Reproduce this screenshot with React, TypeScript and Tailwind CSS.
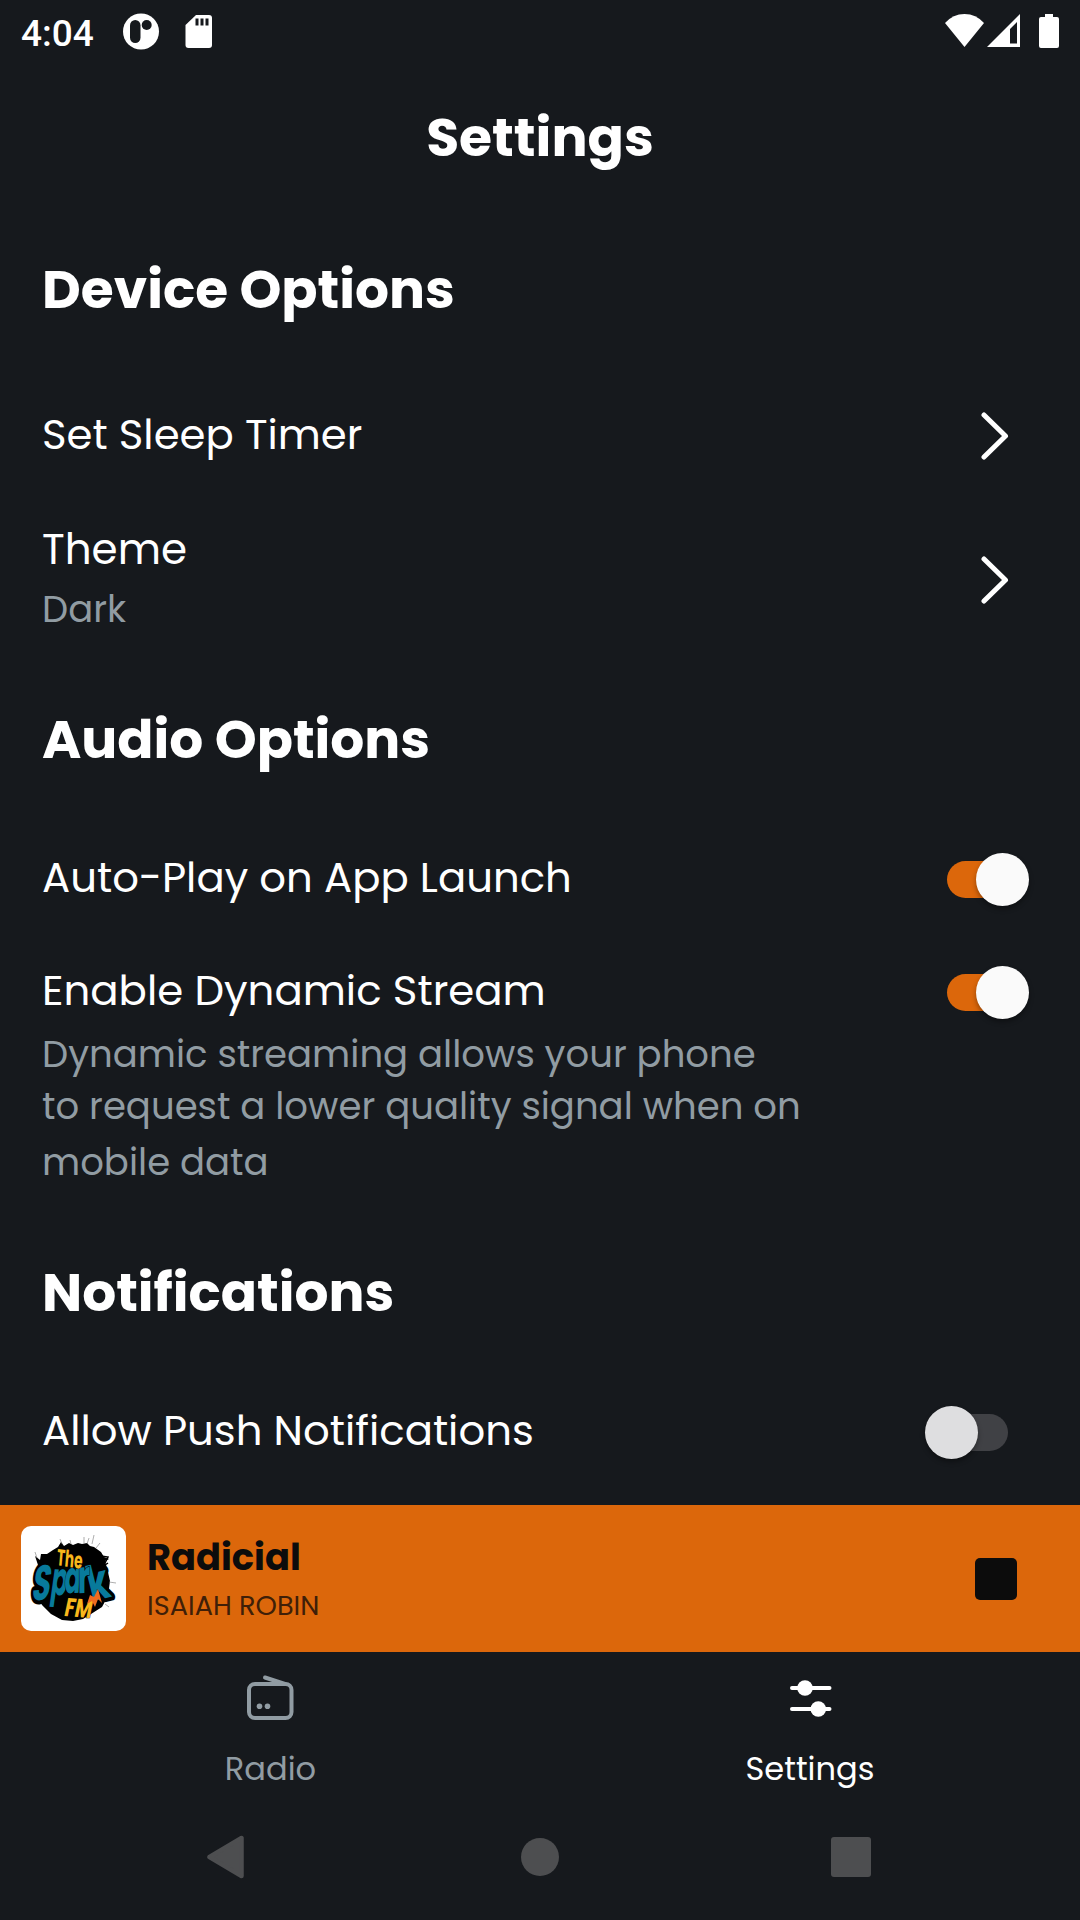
import { useState } from 'react';
import type { ReactNode } from 'react';
import clsx from 'clsx';

function StatusBar() {
  return (
    <div className="flex h-16 items-start justify-between pl-[21px] pr-[21px]">
      <div className="flex">
        <span className="w-[102px] pt-[14px] font-['Roboto'] text-[37px] font-medium leading-[40px]">4:04</span>
        <svg className="mt-[13px]" width="37" height="37" viewBox="0 0 37 37">
          <circle cx="18" cy="18.5" r="18" fill="#fff" />
          <rect x="7" y="7" width="10.5" height="23" rx="5.25" fill="#16191d" />
          <circle cx="23.7" cy="12" r="5" fill="#16191d" />
        </svg>
        <svg className="ml-[25px] mt-[15px]" width="28" height="34" viewBox="0 0 28 34">
          <path d="M11 0H24Q27 0 27 3V30Q27 33 24 33H3.5Q.5 33 .5 30V10Z" fill="#fff" />
          <path d="M10.5 3.5H13.5V10.5H10.5ZM15.5 3.5H18.5V10.5H15.5ZM20.5 3.5H23.5V10.5H20.5Z" fill="#16191d" />
        </svg>
      </div>
      <div className="flex pt-[14px]">
        <svg width="39" height="34" viewBox="0 0 39 34">
          <path d="M0 9Q8 0 19.5 0T39 9L19.5 33Z" fill="#fff" />
        </svg>
        <svg className="ml-[3px]" width="34" height="34" viewBox="0 0 34 34">
          <path d="M33 0V33H0ZM30 8L23 15V29.5H30Z" fill="#fff" fillRule="evenodd" />
        </svg>
        <svg className="ml-[18px]" width="20" height="34" viewBox="0 0 20 34">
          <path d="M6 0H14V3H18Q20 3 20 5V32Q20 34 18 34H2Q0 34 0 32V5Q0 3 2 3H6Z" fill="#fff" />
        </svg>
      </div>
    </div>
  );
}

function SectionTitle({ children }: { children: ReactNode }) {
  return <h2 className="flex h-[158px] items-center pt-0.5 text-[53.4px] font-bold leading-[80px]">{children}</h2>;
}

function Chevron() {
  return (
    <svg className="mr-[58px]" width="48" height="48" viewBox="0 0 48 48" fill="none" stroke="#fff" strokeWidth="5" strokeLinecap="round" strokeLinejoin="round">
      <path d="M10 3L31.5 24L10 45" />
    </svg>
  );
}

function Toggle({ on, onClick }: { on: boolean; onClick: () => void }) {
  return (
    <button onClick={onClick} role="switch" aria-checked={on} className="mr-[51px] flex h-[53px] w-[104px] items-center justify-center">
      <span className={clsx('flex h-[37px] w-[61px] items-center rounded-full', on ? 'bg-[#dc670b]' : 'bg-[#404145]')}>
        <span
          className={clsx(
            'h-[53px] w-[53px] shrink-0 rounded-full shadow-[0_3px_5px_rgba(0,0,0,0.35)]',
            on ? 'ml-[29px] bg-[#fafafa]' : '-ml-[22px] bg-[#dedee0]'
          )}
        />
      </span>
    </button>
  );
}

function AlbumArt() {
  return (
    <svg width="105" height="105" viewBox="0 0 105 105" className="rounded-[10px] bg-white">
      {/* ink splatter */}
      <path
        d="M18 42L14 30L19 34L20 28L26 28L32 24L37 21L40 16L43 20L48 17L52 19L57 17L61 18L66 17L69 20L73 21L80 26L83 31L88 33L84 35L86 42L89 55L87 70L81 81L70 88L62 93L52 95L41 94L30 88L21 79L15 68Z"
        fill="#000"
      />
      <path d="M39 13l2 5M49 14l1 4M63 11l0 6M68 12l-2 6M73 9l-2 9M79 17l-4 5M14 26l2 6M88 56l7 1M84 78l4 3" stroke="#777" strokeWidth=".6" />
      <path d="M80 30l7 1l-3 6M84 39l3-2" stroke="#000" strokeWidth="1.5" fill="none" />
      <g fontFamily="Poppins, sans-serif" fontWeight="700" textAnchor="middle" paintOrder="stroke" stroke="#000" strokeLinejoin="round">
        <g fontSize="36" fill="#087a9b" strokeWidth="6">
          <text transform="translate(19 74) rotate(-6) skewX(-14) scale(.84 1.35)">S</text>
          <text transform="translate(81 73) rotate(-14) scale(.95 1.35)">k</text>
        </g>
        <g fontSize="40" fill="#087a9b" strokeWidth="1">
          <text transform="translate(37 69) rotate(4) skewX(-4) scale(.6 1.15)">p</text>
          <text transform="translate(51 67) rotate(-2) skewX(-6) scale(.6 1.1)">a</text>
          <text transform="translate(63 67) rotate(-4) skewX(-4) scale(.72 1.15)">r</text>
        </g>
        <g fill="#f8b71c" strokeWidth="1">
          <text fontSize="23" transform="translate(48 41) rotate(9) skewX(4) scale(.6 1)">The</text>
          <text fontSize="26" transform="translate(56 91) rotate(4) skewX(-8) scale(.72 1)">FM</text>
        </g>
      </g>
      <path d="M66 78L69 69L73 71L77 63L81 77L77 73L74 81L71 75Z" fill="#ef6b20" />
    </svg>
  );
}

function RadioIcon() {
  return (
    <svg width="52" height="52" viewBox="0 0 52 52" fill="none" stroke="#919ca3" strokeWidth="4" strokeLinecap="round" strokeLinejoin="round">
      <rect x="5" y="14" width="42.5" height="34" rx="6" />
      <path d="M21 7.5L41 14" />
      <circle cx="15.5" cy="36.3" r="2.8" fill="#919ca3" stroke="none" />
      <circle cx="23.5" cy="36.3" r="2.8" fill="#919ca3" stroke="none" />
    </svg>
  );
}

function SlidersIcon() {
  return (
    <svg width="52" height="52" viewBox="0 0 52 52" fill="#fff" stroke="#fff" strokeWidth="4" strokeLinecap="round">
      <path d="M8 18H45.5M8 39H45.5" />
      <circle cx="21" cy="18" r="7.8" stroke="none" />
      <circle cx="34.3" cy="39" r="7.8" stroke="none" />
    </svg>
  );
}

function App() {
  const [autoPlay, setAutoPlay] = useState(true);
  const [dynamicStream, setDynamicStream] = useState(true);
  const [push, setPush] = useState(false);

  return (
    <div className="flex h-[1920px] w-[1080px] flex-col overflow-hidden bg-[#16191d] font-['Poppins',sans-serif] text-white">
      <StatusBar />
      <header className="flex h-[146px] items-center justify-center pt-0.5">
        <h1 className="text-[53.6px] font-bold leading-[80px]">Settings</h1>
      </header>

      <main className="h-[1295px] pl-[42px]">
        <SectionTitle>Device Options</SectionTitle>
        <div className="flex h-[132px] items-center justify-between pt-0.5">
          <span className="text-[41.8px] leading-[60px]">Set Sleep Timer</span>
          <div className="pt-0.5">
            <Chevron />
          </div>
        </div>
        <div className="flex h-[160px] items-center justify-between">
          <div className="flex flex-col pb-px">
            <span className="text-[42px] leading-[60px]">Theme</span>
            <span className="text-[37px] leading-[59px] text-[#919ca3]">Dark</span>
          </div>
          <Chevron />
        </div>

        <SectionTitle>Audio Options</SectionTitle>
        <div className="flex h-[118px] items-center justify-between pt-0.5">
          <span className="text-[41.8px] leading-[60px]">Auto-Play on App Launch</span>
          <div className="pt-0.5">
            <Toggle on={autoPlay} onClick={() => setAutoPlay(!autoPlay)} />
          </div>
        </div>
        <div className="flex h-[277px] items-start justify-between pt-[25px]">
          <div className="flex flex-col">
            <span className="text-[41.9px] leading-[60px]">Enable Dynamic Stream</span>
            <p className="mt-[7px] text-[37.05px] leading-[52px] text-[#919ca3]">
              <span className="block">Dynamic streaming allows your phone</span>
              <span className="block">to request a lower quality signal when on</span>
              <span className="mt-1 block">mobile data</span>
            </p>
          </div>
          <div className="pt-[5px]">
            <Toggle on={dynamicStream} onClick={() => setDynamicStream(!dynamicStream)} />
          </div>
        </div>

        <SectionTitle>Notifications</SectionTitle>
        <div className="flex h-[118px] items-center justify-between pt-0.5">
          <span className="text-[41.8px] leading-[60px]">Allow Push Notifications</span>
          <div className="pt-0.5">
            <Toggle on={push} onClick={() => setPush(!push)} />
          </div>
        </div>
      </main>

      <div className="flex h-[147px] items-center bg-[#dc670b] px-[21px] text-[#0c0c0c]">
        <AlbumArt />
        <div className="ml-[21px] flex flex-1 flex-col pt-[3px]">
          <span className="text-[36.8px] font-bold leading-[50px]">Radicial</span>
          <span className="text-[27.2px] leading-[47px] text-[#3f1f08]">ISAIAH ROBIN</span>
        </div>
        <button className="mr-[42px] mt-px h-[42px] w-[42px] rounded-[5px] bg-[#0c0c0c]" aria-label="Stop" />
      </div>

      <nav className="grid h-[142px] grid-cols-2 text-[32.1px] leading-[48px]">
        <button className="flex flex-col items-center gap-[23px] pt-[18px] text-[#919ca3]">
          <RadioIcon />
          <span className="pl-px">Radio</span>
        </button>
        <button className="flex flex-col items-center gap-[23px] pt-[18px]">
          <SlidersIcon />
          <span>Settings</span>
        </button>
      </nav>

      <div className="flex h-[126px] items-center justify-between pl-[206px] pr-[209px]">
        <svg width="38" height="44" viewBox="0 0 38 44">
          <path d="M35.5 3V41L3.5 22Z" fill="#4d4e50" stroke="#4d4e50" strokeWidth="4.5" strokeLinejoin="round" />
        </svg>
        <span className="ml-[69px] mr-[64px] h-[38px] w-[38px] rounded-full bg-[#4d4e50]" />
        <span className="h-[40px] w-[40px] rounded-[3px] bg-[#4d4e50]" />
      </div>
    </div>
  );
}

export default App;
